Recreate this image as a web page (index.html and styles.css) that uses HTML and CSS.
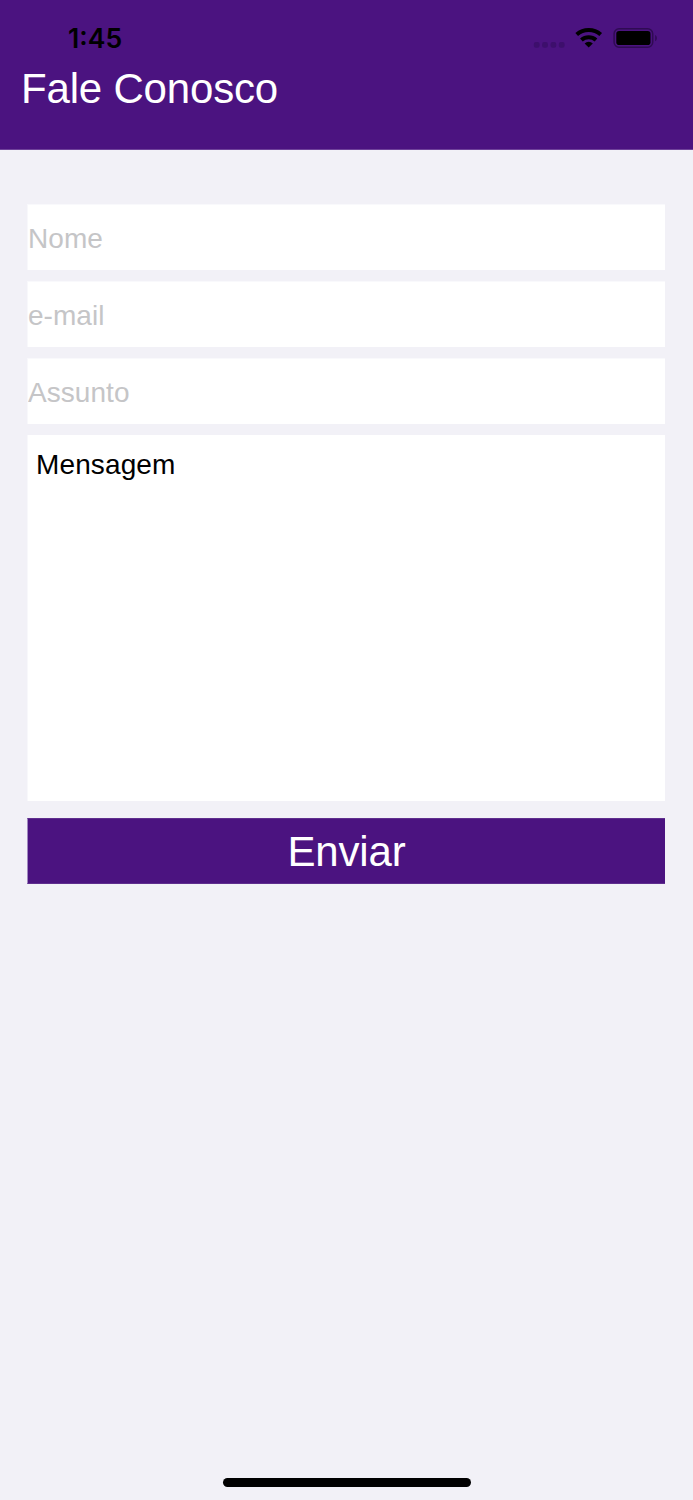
FILE: index.html
```
<!DOCTYPE html>
<html lang="pt-BR">
<head>
<meta charset="utf-8">
<title>Fale Conosco</title>
<link rel="stylesheet" href="styles.css">
</head>
<body>
<div class="screen">
  <header class="header">
    <div class="status">
      <span class="time">1:45</span>
      <svg class="indicators" width="126" height="24" viewBox="0 0 126 24">
        <g fill="#3d0f6c">
          <rect x="0.8" y="16" width="5.8" height="5.8" rx="2"/>
          <rect x="9.1" y="16" width="5.8" height="5.8" rx="2"/>
          <rect x="17.5" y="16" width="5.8" height="5.8" rx="2"/>
          <rect x="25.8" y="16" width="5.8" height="5.8" rx="2"/>
        </g>
        <g fill="none" stroke="#000" stroke-width="4">
          <path d="M43.7 8.5a18 18 0 0 1 24 0"/>
          <path d="M48.4 14a11 11 0 0 1 14.6 0"/>
        </g>
        <path d="M51.6 17.4a6 6 0 0 1 8.2 0L55.7 21.5z"/>
        <rect x="81.1" y="2.7" width="38.6" height="18.6" rx="5" fill="none" stroke="#2f0b53" stroke-width="1.5"/>
        <rect x="83.3" y="5" width="34.2" height="14" rx="2.8"/>
        <path d="M122.2 9c2.2 1 2.2 5.2 0 6.2z" fill="#2f0b53"/>
      </svg>
    </div>
    <h1 class="title">Fale Conosco</h1>
  </header>
  <form class="form">
    <input class="field" type="text" placeholder="Nome">
    <input class="field" type="text" placeholder="e-mail">
    <input class="field" type="text" placeholder="Assunto">
    <textarea class="message">Mensagem</textarea>
    <button class="send" type="button">Enviar</button>
  </form>
  <div class="home"></div>
</div>
</body>
</html>
```
FILE: styles.css
```
* { box-sizing: border-box; }
body {
  margin: 0;
  font-family: "Liberation Sans", Arial, sans-serif;
}
.screen {
  display: flex;
  flex-direction: column;
  height: 1500px;
  background: #f2f1f7;
}
.header {
  height: 150px;
  padding-top: 26px;
  background: #4b1380;
  border-bottom: 1px solid #6f429a;
}
.status {
  display: flex;
  justify-content: space-between;
  height: 24px;
  padding: 0 34px 0 68px;
}
.time {
  font: 600 26.6px/25px Inter, sans-serif;
  color: #000;
}
.title {
  margin: 15px 0 0 21px;
  font-size: 42px;
  font-weight: 400;
  line-height: 48px;
  letter-spacing: -0.18px;
  color: #fff;
}
.form {
  display: flex;
  flex-direction: column;
  gap: 11px;
  padding: 54px 28px 0 27px;
}
.field, .message, .send {
  display: block;
  width: 100%;
  margin: 0;
  border: 0;
  border-radius: 0;
  font-family: inherit;
  outline: none;
}
.field {
  height: 66px;
  padding: 2px 0 0;
  border-left: 1px solid #f8f8fb;
  border-top: 1px solid #f9f9fc;
  background: #fff;
  font-size: 28px;
  letter-spacing: 0.05px;
}
.field::placeholder {
  color: #c5c5c7;
  opacity: 1;
}
.message {
  height: 366px;
  padding: 14px 8px;
  border-left: 1px solid #f8f8fb;
  background: #fff;
  color: #000;
  font-size: 28px;
  line-height: 32px;
  letter-spacing: 0.12px;
  resize: none;
}
.send {
  height: 66px;
  margin-top: 6px;
  padding: 1px 0 0;
  border: 1px solid #5f2e8e;
  border-left-color: #a189c0;
  border-right: 0;
  background: #4b1380;
  color: #fff;
  font-size: 42px;
  line-height: 63px;
  letter-spacing: -0.15px;
}
.home {
  width: 248px;
  height: 9px;
  margin: auto 223px 13px 222.5px;
  border-radius: 5px;
  background: #000;
}
```
